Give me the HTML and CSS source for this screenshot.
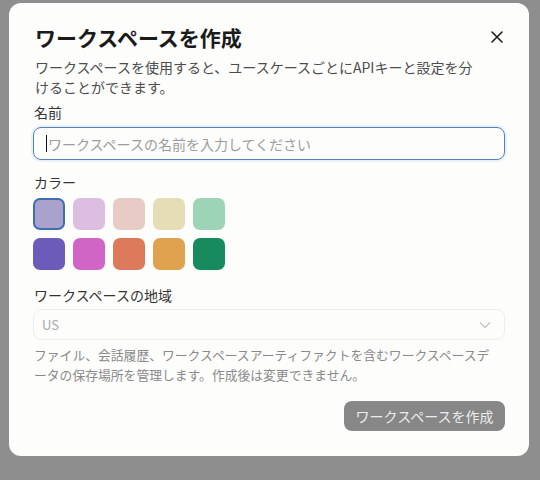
FILE: index.html
```html
<!DOCTYPE html>
<html lang="ja">
<head>
    <meta charset="UTF-8">
    <meta name="viewport" content="width=device-width, initial-scale=1.0">
    <title>ワークスペースを作成</title>
    <link rel="stylesheet" href="styles.css">
</head>
<body>
    <div class="dialog">
        <div class="dialog-head">
            <h1 class="title">ワークスペースを作成</h1>
            <button class="close" aria-label="閉じる">
                <svg width="12" height="12" viewBox="0 0 12 12">
                    <path d="M1 1 L11 11 M11 1 L1 11" stroke="#1f1f1f" stroke-width="1.6" stroke-linecap="round"/>
                </svg>
            </button>
        </div>
        <p class="desc">ワークスペースを使用すると、ユースケースごとにAPIキーと設定を分けることができます。</p>

        <label class="label">名前</label>
        <div class="field focused">
            <span class="caret"></span>
            <span class="placeholder">ワークスペースの名前を入力してください</span>
        </div>

        <label class="label label-color">カラー</label>
        <div class="swatches">
            <div class="swatch selected" style="background:#aaa1cd"></div>
            <div class="swatch" style="background:#dcbfe0"></div>
            <div class="swatch" style="background:#e8cbc4"></div>
            <div class="swatch" style="background:#e4ddb6"></div>
            <div class="swatch" style="background:#9dd4b7"></div>
            <div class="swatch" style="background:#6c5bb9"></div>
            <div class="swatch" style="background:#d165c5"></div>
            <div class="swatch" style="background:#dd7a5b"></div>
            <div class="swatch" style="background:#dfa34f"></div>
            <div class="swatch" style="background:#178b5d"></div>
        </div>

        <label class="label label-region">ワークスペースの地域</label>
        <div class="select">
            <span>US</span>
            <svg width="12" height="8" viewBox="0 0 12 8">
                <path d="M1 1.5 L6 6.5 L11 1.5" fill="none" stroke="#c4c4c4" stroke-width="1.3"/>
            </svg>
        </div>
        <p class="help">ファイル、会話履歴、ワークスペースアーティファクトを含むワークスペースデータの保存場所を管理します。作成後は変更できません。</p>

        <div class="actions">
            <button class="submit" disabled>ワークスペースを作成</button>
        </div>
    </div>
</body>
</html>
```

FILE: styles.css
```css
body {
    margin: 0;
    height: 480px;
    background-color: #8e8e8e;
    font-family: "Noto Sans CJK JP", "Noto Sans", sans-serif;
    overflow: hidden;
}

.dialog {
    width: 472px;
    margin: 3px 0 0 9px;
    padding: 20px 24px 25px;
    background-color: #fdfdfc;
    border-radius: 12px;
}

.dialog-head {
    display: flex;
    align-items: center;
    justify-content: space-between;
}

.title {
    margin: 0 0 0 2px;
    font-size: 21px;
    line-height: 28px;
    font-weight: 700;
    color: #1b1b1b;
}

.close {
    border: none;
    background: none;
    padding: 0;
    margin-right: 2px;
    width: 12px;
    height: 12px;
    display: flex;
}

.desc {
    margin: 7px 0 0 2px;
    max-width: 440px;
    font-size: 14px;
    line-height: 19.5px;
    color: #4c4c4c;
}

.label {
    display: block;
    margin: 5px 0 5px 1px;
    font-size: 14px;
    line-height: 20px;
    color: #333;
}

.field {
    height: 33px;
    box-sizing: border-box;
    border: 1.5px solid #5582bd;
    border-radius: 8px;
    box-shadow: 0 0 0 2px #eaf1f9;
    display: flex;
    align-items: center;
    padding-left: 12px;
}

.caret {
    width: 1px;
    height: 17px;
    background-color: #111;
    margin-right: 1px;
}

.placeholder {
    font-size: 14px;
    color: #9c9c9c;
}

.label-color {
    margin-top: 12px;
    margin-bottom: 6px;
}

.swatches {
    display: grid;
    grid-template-columns: repeat(5, 32px);
    gap: 8px;
}

.swatch {
    width: 32px;
    height: 32px;
    box-sizing: border-box;
    border-radius: 7px;
}

.swatch.selected {
    border: 2px solid #3f6db3;
}

.label-region {
    margin-top: 15px;
    margin-bottom: 4px;
}

.select {
    height: 31px;
    box-sizing: border-box;
    border: 1px solid #eeeeec;
    border-radius: 8px;
    display: flex;
    align-items: center;
    justify-content: space-between;
    padding: 0 13px 0 8px;
    font-size: 13px;
    color: #a9a9a9;
}

.help {
    margin: 5px 0 0 1px;
    max-width: 462px;
    font-size: 12.8px;
    line-height: 20px;
    color: #8a8a8a;
}

.actions {
    display: flex;
    justify-content: flex-end;
    margin-top: 16px;
}

.submit {
    height: 30px;
    width: 161px;
    border: none;
    border-radius: 8px;
    background-color: #878787;
    color: #ececec;
    font-family: inherit;
    font-size: 14px;
    padding: 0;
}
```
